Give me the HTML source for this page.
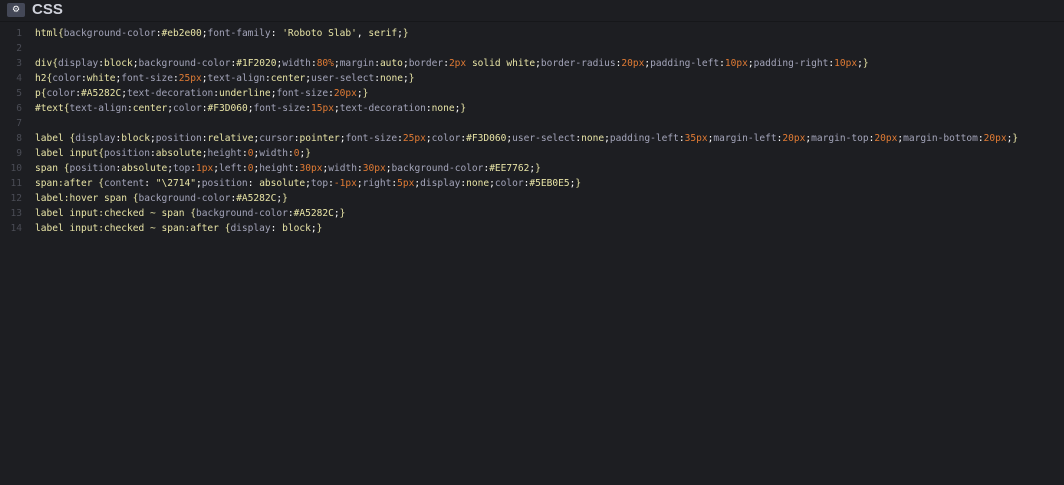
<!DOCTYPE html>
<html><head><style>
body{margin:0;width:1064px;height:485px;background:#1d1e22;overflow:hidden;font-family:"DejaVu Sans Mono","Liberation Mono",monospace;}
.hd{height:21px;background:#1d1e22;border-bottom:1px solid #16171a;position:relative;}
.ic{position:absolute;left:7px;top:3px;width:18px;height:14px;background:#444857;border-radius:2px;color:#fff;font-size:9px;line-height:14px;text-align:center;font-family:"DejaVu Sans",sans-serif;}
.tt{position:absolute;left:32px;top:1px;font:bold 15px "Liberation Sans",sans-serif;color:#cfd1da;}
.code{position:absolute;top:26px;left:0;font-size:9.55px;line-height:15px;white-space:pre;color:#fff;}
.ln{display:inline-block;width:22px;text-align:right;color:#4a4c55;margin-right:13px;}
.s{color:#e8e4a6}.p{color:#a3a4b9}.v{color:#e8e4a6}.n{color:#e07b34}.b{color:#e8e4a6}.w{color:#fff}
</style></head><body>
<div class="hd"><div class="ic">⚙</div><div class="tt">CSS</div></div>
<div class="code"><span class="ln">1</span><span class="s">html</span><span class="b">{</span><span class="p">background-color</span>:<span class="v">#eb2e00</span>;<span class="p">font-family</span>: <span class="v">'Roboto Slab'</span>, <span class="v">serif</span>;<span class="b">}</span>
<span class="ln">2</span>
<span class="ln">3</span><span class="s">div</span><span class="b">{</span><span class="p">display</span>:<span class="v">block</span>;<span class="p">background-color</span>:<span class="v">#1F2020</span>;<span class="p">width</span>:<span class="n">80%</span>;<span class="p">margin</span>:<span class="v">auto</span>;<span class="p">border</span>:<span class="n">2px</span> <span class="v">solid white</span>;<span class="p">border-radius</span>:<span class="n">20px</span>;<span class="p">padding-left</span>:<span class="n">10px</span>;<span class="p">padding-right</span>:<span class="n">10px</span>;<span class="b">}</span>
<span class="ln">4</span><span class="s">h2</span><span class="b">{</span><span class="p">color</span>:<span class="v">white</span>;<span class="p">font-size</span>:<span class="n">25px</span>;<span class="p">text-align</span>:<span class="v">center</span>;<span class="p">user-select</span>:<span class="v">none</span>;<span class="b">}</span>
<span class="ln">5</span><span class="s">p</span><span class="b">{</span><span class="p">color</span>:<span class="v">#A5282C</span>;<span class="p">text-decoration</span>:<span class="v">underline</span>;<span class="p">font-size</span>:<span class="n">20px</span>;<span class="b">}</span>
<span class="ln">6</span><span class="s">#text</span><span class="b">{</span><span class="p">text-align</span>:<span class="v">center</span>;<span class="p">color</span>:<span class="v">#F3D060</span>;<span class="p">font-size</span>:<span class="n">15px</span>;<span class="p">text-decoration</span>:<span class="v">none</span>;<span class="b">}</span>
<span class="ln">7</span>
<span class="ln">8</span><span class="s">label</span> <span class="b">{</span><span class="p">display</span>:<span class="v">block</span>;<span class="p">position</span>:<span class="v">relative</span>;<span class="p">cursor</span>:<span class="v">pointer</span>;<span class="p">font-size</span>:<span class="n">25px</span>;<span class="p">color</span>:<span class="v">#F3D060</span>;<span class="p">user-select</span>:<span class="v">none</span>;<span class="p">padding-left</span>:<span class="n">35px</span>;<span class="p">margin-left</span>:<span class="n">20px</span>;<span class="p">margin-top</span>:<span class="n">20px</span>;<span class="p">margin-bottom</span>:<span class="n">20px</span>;<span class="b">}</span>
<span class="ln">9</span><span class="s">label input</span><span class="b">{</span><span class="p">position</span>:<span class="v">absolute</span>;<span class="p">height</span>:<span class="n">0</span>;<span class="p">width</span>:<span class="n">0</span>;<span class="b">}</span>
<span class="ln">10</span><span class="s">span</span> <span class="b">{</span><span class="p">position</span>:<span class="v">absolute</span>;<span class="p">top</span>:<span class="n">1px</span>;<span class="p">left</span>:<span class="n">0</span>;<span class="p">height</span>:<span class="n">30px</span>;<span class="p">width</span>:<span class="n">30px</span>;<span class="p">background-color</span>:<span class="v">#EE7762</span>;<span class="b">}</span>
<span class="ln">11</span><span class="s">span:after</span> <span class="b">{</span><span class="p">content</span>: <span class="v">"\2714"</span>;<span class="p">position</span>: <span class="v">absolute</span>;<span class="p">top</span>:<span class="n">-1px</span>;<span class="p">right</span>:<span class="n">5px</span>;<span class="p">display</span>:<span class="v">none</span>;<span class="p">color</span>:<span class="v">#5EB0E5</span>;<span class="b">}</span>
<span class="ln">12</span><span class="s">label:hover span</span> <span class="b">{</span><span class="p">background-color</span>:<span class="v">#A5282C</span>;<span class="b">}</span>
<span class="ln">13</span><span class="s">label input:checked ~ span</span> <span class="b">{</span><span class="p">background-color</span>:<span class="v">#A5282C</span>;<span class="b">}</span>
<span class="ln">14</span><span class="s">label input:checked ~ span:after</span> <span class="b">{</span><span class="p">display</span>: <span class="v">block</span>;<span class="b">}</span></div>
</body></html>
